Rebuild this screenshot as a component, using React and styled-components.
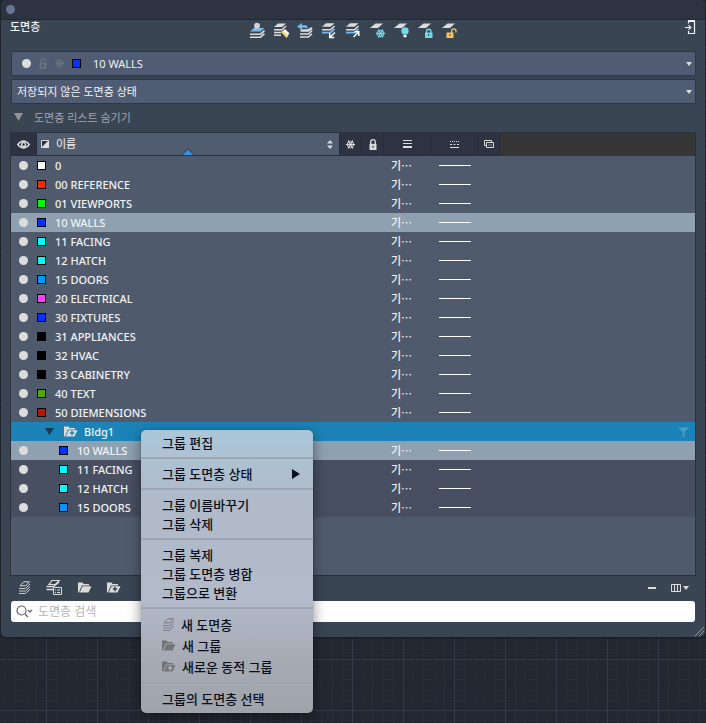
import React from 'react';

//styled
import styled, { createGlobalStyle } from 'styled-components';


const layers = [
    { name: '0', color: '#ffffff' },
    { name: '00 REFERENCE', color: '#ff2600' },
    { name: '01 VIEWPORTS', color: '#00f900' },
    { name: '10 WALLS', color: '#0433ff', selected: true },
    { name: '11 FACING', color: '#00fdff' },
    { name: '12 HATCH', color: '#00fdff' },
    { name: '15 DOORS', color: '#0096ff' },
    { name: '20 ELECTRICAL', color: '#ff40ff' },
    { name: '30 FIXTURES', color: '#0433ff' },
    { name: '31 APPLIANCES', color: '#000000' },
    { name: '32 HVAC', color: '#000000' },
    { name: '33 CABINETRY', color: '#000000' },
    { name: '40 TEXT', color: '#4fa800' },
    { name: '50 DIEMENSIONS', color: '#b51700' },
];

const groupLayers = [
    { name: '10 WALLS', color: '#0433ff', selected: true },
    { name: '11 FACING', color: '#00fdff' },
    { name: '12 HATCH', color: '#00fdff' },
    { name: '15 DOORS', color: '#0096ff' },
];

// icons
const Icon = ({ w = 16, h = 16, children }) => (
    <svg width={w} height={h} viewBox={`0 0 ${w} ${h}`} fill="none" aria-hidden="true">
        {children}
    </svg>
);

const Caret = () => (
    <Icon w={6} h={4}><path d="M0 0h6L3 4z" fill="#dcdcdc" /></Icon>
);

const Snow = ({ color = '#dcdcdc' }) => (
    <Icon w={9} h={9}>
        <path d="M0 4.500h9M2.200.500l4.600 8M6.800.500l-4.600 8" stroke={color} strokeWidth="1.200" />
        <path d="M4.500 1.200L7.400 2.800v3.400L4.500 7.800 1.600 6.200V2.800z" stroke={color} />
    </Icon>
);

const Lock = ({ color = '#dcdcdc' }) => (
    <Icon w={8} h={11}>
        <path d="M1.700 5V3a2.300 2.300 0 0 1 4.600 0v2" stroke={color} strokeWidth="1.300" />
        <path d="M.5 4.800h7V11h-7z" fill={color} />
        <path d="M4 6.500v2.500" stroke="#2d3340" />
    </Icon>
);

const Sheets = ({ color = '#dcdcdc' }) => (
    <Icon w={13} h={13}>
        <path d="M5.800.800h5.700L7.800 4.800H2z" stroke={color} />
        <path d="M1 7.500H7.500L12 3.200M1 10H7.500L12 5.700M1 12.500H7.500L12 8.200" stroke={color} strokeWidth=".9" />
    </Icon>
);

const SheetsList = () => (
    <Icon w={17} h={17}>
        <path d="M6 1.500h7.200L9.500 5.500H3z" stroke="#dcdcdc" strokeWidth="1.200" />
        <path d="M.5 7.500H7.500L13 3M.5 10.500H7" stroke="#dcdcdc" strokeWidth="1.400" />
        <path d="M7.500 8.500h8v7h-8z" fill="#3a4554" stroke="#dcdcdc" />
        <path d="M9 11h1M11 11h3M9 13.500h1M11 13.500h3" stroke="#dcdcdc" />
    </Icon>
);

const Folder = ({ color = '#dcdcdc', mark }) => (
    <Icon w={14} h={11}>
        <path d="M0 10.500V.5h4.500l1.200 1.500H11v1.500H3.800L1 10.500z" fill={color} />
        <path d="M4.500 4.300H13.500L10.500 10.500H1.800z" fill={color} />
        {mark && <path d="M8 4.800v4.400M5.800 7h4.400" stroke={mark} strokeWidth="1.400" />}
    </Icon>
);

const SmallSheet = () => <path d="M1 6L6.500 1.500H14L9 6z" fill="#dcdcdc" />;

const toolIcons = [
    {
        label: '현재로 설정',
        art: <>
            <path d="M1 9.500L5 6h10.500l-4 3.500z" fill="#78b9ee" />
            <circle cx="8" cy="3.800" r="3" fill="#d2d2d4" />
            <path d="M1 12.200h10.500l4-3.600M1 15.200h10.500l4-3.600" stroke="#dcdcdc" strokeWidth="1.600" />
        </>,
    },
    {
        label: '도면층 일치',
        art: <>
            <path d="M1 5L5 1.500h8L9 5z" fill="#dcdcdc" />
            <path d="M1 7.700h8l4-3.600M1 10.500h7M1 13.200h7" stroke="#dcdcdc" strokeWidth="1.400" />
            <path d="M9.500 9.500L12 7l4.500 4.500L14 14z" fill="#fff" />
            <path d="M8 10l2-1.500 5.500 5-2 2.500z" fill="#fcd66f" />
        </>,
    },
    {
        label: '이전',
        art: <>
            <path d="M3.500 8.500h8L15 6" stroke="#dcdcdc" strokeWidth="2.400" />
            <path d="M3 12h8.500l3.500-3.200M3 15h8.500l3.500-3.200" stroke="#dcdcdc" strokeWidth="1.500" />
            <path d="M0 4.500L5 1v2.200h4.500l2 3.800-2.500-1.300H5V8z" fill="#78b9ee" />
        </>,
    },
    {
        label: '분리',
        art: <>
            <path d="M1 4.800L5 1.300h8.500l-4 3.500z" fill="#dcdcdc" />
            <path d="M1 7.700h8.500l4-3.600" stroke="#dcdcdc" strokeWidth="1.500" />
            <path d="M1 10.700h8.500l4-3.600" stroke="#78b9ee" strokeWidth="1.800" />
            <path d="M14 10.500L9 15M8.700 11v4.400h4.500" stroke="#fff" strokeWidth="1.500" />
        </>,
    },
    {
        label: '분리 해제',
        art: <>
            <path d="M1 4.800L5 1.300h8.500l-4 3.500z" fill="#dcdcdc" />
            <path d="M1 7.700h8.500l4-3.600" stroke="#dcdcdc" strokeWidth="1.500" />
            <path d="M1 10.700h8.500l4-3.600" stroke="#78b9ee" strokeWidth="1.800" />
            <path d="M8.500 15l5-5M9.500 9.800h4.300v4.200" stroke="#fff" strokeWidth="1.500" />
        </>,
    },
    {
        label: '동결',
        art: <>
            <SmallSheet />
            <path d="M7 11.500h9M9.300 7.500l4.500 8M13.800 7.500l-4.500 8" stroke="#6fd3e3" strokeWidth="1.300" />
            <circle cx="11.500" cy="11.500" r="3.200" stroke="#6fd3e3" strokeWidth="1.200" />
        </>,
    },
    {
        label: '끄기',
        art: <>
            <SmallSheet />
            <circle cx="12" cy="9" r="3.700" fill="#6fdbe4" />
            <path d="M10.500 13h3v1.500l-1 1h-1l-1-1z" fill="#fff" />
        </>,
    },
    {
        label: '잠금',
        art: <>
            <SmallSheet />
            <path d="M9.500 11V9.500a2 2 0 0 1 4.500 0V11" stroke="#6fdbe4" strokeWidth="1.300" />
            <path d="M8 10.500h7.500V16H8z" fill="#6fdbe4" />
            <path d="M11.700 12v2" stroke="#3a4554" />
        </>,
    },
    {
        label: '잠금 해제',
        art: <>
            <SmallSheet />
            <path d="M10.700 11V9a2 2 0 0 1 4.300 0v1.500" stroke="#fcc55c" strokeWidth="1.300" />
            <path d="M5.500 10.500h7V16h-7z" fill="#fcc55c" />
            <path d="M9 12v2" stroke="#3a4554" />
        </>,
    },
];

const GlobalStyle = createGlobalStyle`
 * {
     box-sizing: border-box;
 }
 body{
     margin: 0;
     background: #222831;
     font-family: "Noto Sans", "Noto Sans CJK KR", sans-serif;
     font-size: 11px;
     color: #f2f2f2;
 }
 button, select, input{
     font: inherit;
     color: inherit;
 }
 svg{
     display: block;
     flex: none;
 }
`;

const LayerRow = ({ layer, nested }) => (
    <Row $selected={layer.selected} $nested={nested}>
        <td><Dot type="checkbox" defaultChecked aria-label={layer.name} /></td>
        <td>
            <LayerName $nested={nested}>
                <Swatch $color={layer.color} />
                {layer.name}
            </LayerName>
        </td>
        <td />
        <td />
        <Weight>기⋯</Weight>
        <td><Stroke /></td>
        <td colSpan={2} />
    </Row>
);

const App = () => {
    return (
        <Desktop>
            <GlobalStyle />
            <Palette>
                <TitleBar><CloseButton aria-label="닫기" /></TitleBar>
                <Header>
                    <Title>도면층</Title>
                    <Tools>
                        {toolIcons.map((tool) => (
                            <IconButton key={tool.label} aria-label={tool.label}>
                                <Icon w={17} h={17}>{tool.art}</Icon>
                            </IconButton>
                        ))}
                    </Tools>
                    <DockButton aria-label="고정">
                        <Icon w={11} h={15}>
                            <path d="M3.500 3.500V1.500h6v12h-6V11" stroke="#f2f2f2" strokeWidth="1.200" />
                            <path d="M3 1h7" stroke="#f2f2f2" strokeWidth="2" />
                            <path d="M0 7.500h5M3.500 5.200L5.800 7.500 3.500 9.800" stroke="#f2f2f2" strokeWidth="1.200" />
                        </Icon>
                    </DockButton>
                </Header>

                <Content>
                    <Combo>
                        <LayerState>
                            <StateDot />
                            <Lock color="#68717f" />
                            <Snow color="#68717f" />
                            <Swatch $color="#0433ff" />
                        </LayerState>
                        <Select aria-label="현재 도면층" defaultValue="10 WALLS">
                            {layers.map((l) => <option key={l.name}>{l.name}</option>)}
                        </Select>
                        <Caret />
                    </Combo>
                    <Combo>
                        <Select aria-label="도면층 상태">
                            <option>저장되지 않은 도면층 상태</option>
                        </Select>
                        <Caret />
                    </Combo>

                    <Disclosure aria-expanded="true">
                        <Icon w={9} h={8}><path d="M0 0h9L4.500 8z" fill="#96938d" /></Icon>
                        도면층 리스트 숨기기
                    </Disclosure>

                    <ListBox>
                        <Table>
                            <colgroup>
                                <col width="26" />
                                <col width="303" />
                                <col width="22" />
                                <col width="22" />
                                <col width="47" />
                                <col width="47" />
                                <col width="22" />
                                <col />
                            </colgroup>
                            <thead>
                                <tr>
                                    <HeadCell>
                                        <Icon w={13} h={9}>
                                            <path d="M.7 4.500Q6.500-2.500 12.300 4.500 6.500 11.500.7 4.500z" stroke="#dcdcdc" strokeWidth="1.300" />
                                            <circle cx="6.500" cy="4.500" r="2" stroke="#dcdcdc" strokeWidth="1.400" />
                                        </Icon>
                                    </HeadCell>
                                    <HeadCell $sorted>
                                        <SortButton>
                                            <Icon w={8} h={8}>
                                                <path d="M0 0h8L0 8z" fill="#2d3340" />
                                                <path d="M8 0v8H0z" fill="#dcdcdc" />
                                                <path d="M.5.5h7v7h-7z" stroke="#dcdcdc" />
                                            </Icon>
                                            <span>이름</span>
                                            <Icon w={6} h={9}><path d="M3 0l3 3.500H0zM3 9L0 5.500h6z" fill="#dcdcdc" /></Icon>
                                        </SortButton>
                                        <SortMark>
                                            <Icon w={14} h={7}>
                                                <path d="M.5 6.500L7 .7l6.500 5.800" stroke="#3c4656" />
                                                <path d="M2 7l5-5 5 5z" fill="#2a94ee" />
                                            </Icon>
                                        </SortMark>
                                    </HeadCell>
                                    <HeadCell><Snow /></HeadCell>
                                    <HeadCell><Lock /></HeadCell>
                                    <HeadCell>
                                        <Icon w={9} h={8}><path d="M0 .5h9M0 3.500h9" stroke="#dcdcdc" /><path d="M0 7h9" stroke="#dcdcdc" strokeWidth="2" /></Icon>
                                    </HeadCell>
                                    <HeadCell>
                                        <Icon w={9} h={7}>
                                            <path d="M0 .5h9" stroke="#dcdcdc" strokeDasharray="1 1" />
                                            <path d="M0 3.500h9" stroke="#dcdcdc" strokeDasharray="2 1.500" />
                                            <path d="M0 6.500h9" stroke="#dcdcdc" />
                                        </Icon>
                                    </HeadCell>
                                    <HeadCell>
                                        <Icon w={10} h={8}>
                                            <path d="M2.500 5.500h-2v-5h7v2" stroke="#dcdcdc" />
                                            <path d="M2.500 2.500h7v5h-7z" stroke="#dcdcdc" />
                                            <path d="M4 5h4" stroke="#8a8f98" />
                                        </Icon>
                                    </HeadCell>
                                    <HeadFiller />
                                </tr>
                            </thead>
                            <tbody>
                                {layers.map((l) => <LayerRow key={l.name} layer={l} />)}
                                <GroupRow>
                                    <td colSpan={8}>
                                        <GroupLabel>
                                            <Icon w={9} h={7}><path d="M0 0h9L4.500 7z" fill="#1e3a50" /></Icon>
                                            <Folder mark="#1b83b8" />
                                            <span>Bldg1</span>
                                            <Icon w={11} h={10}><path d="M0 .5h11L6.500 5v5h-2V5z" fill="#4b9cc4" /></Icon>
                                        </GroupLabel>
                                    </td>
                                </GroupRow>
                                {groupLayers.map((l) => <LayerRow key={l.name} layer={l} nested />)}
                            </tbody>
                        </Table>
                    </ListBox>

                    <Footer>
                        <IconButton aria-label="새 도면층"><Sheets /></IconButton>
                        <IconButton aria-label="도면층 목록"><SheetsList /></IconButton>
                        <IconButton aria-label="새 그룹"><Folder /></IconButton>
                        <IconButton aria-label="새로운 동적 그룹"><Folder mark="#3a4554" /></IconButton>
                        <Spacer />
                        <IconButton aria-label="삭제">
                            <Icon w={8} h={2}><path d="M0 1h8" stroke="#dcdcdc" strokeWidth="2" /></Icon>
                        </IconButton>
                        <IconButton aria-label="열">
                            <Icon w={10} h={8}><path d="M.5.500h9v7h-9zM3.500 0v8M6.500 0v8" stroke="#dcdcdc" /></Icon>
                            <Caret />
                        </IconButton>
                    </Footer>

                    <Search>
                        <Icon w={17} h={13}>
                            <circle cx="5.500" cy="5.500" r="4.500" stroke="#606366" strokeWidth="1.200" />
                            <path d="M9 9l3 3M12 5l2 2 2-2" stroke="#606366" strokeWidth="1.200" />
                        </Icon>
                        <input type="search" placeholder="도면층 검색" aria-label="도면층 검색" />
                    </Search>
                </Content>

                <Grip>
                    <Icon w={9} h={9}><path d="M0 9l9-9M4 9l5-5" stroke="#9a9ea5" /></Icon>
                </Grip>

                <Menu role="menu">
                    <MenuItem role="menuitem">그룹 편집</MenuItem>
                    <Divider />
                    <MenuItem role="menuitem">
                        <span>그룹 도면층 상태</span>
                        <Icon w={8} h={10}><path d="M0 0l8 5-8 5z" fill="#0a0f1a" /></Icon>
                    </MenuItem>
                    <Divider />
                    <MenuItem role="menuitem">그룹 이름바꾸기</MenuItem>
                    <MenuItem role="menuitem">그룹 삭제</MenuItem>
                    <Divider />
                    <MenuItem role="menuitem">그룹 복제</MenuItem>
                    <MenuItem role="menuitem">그룹 도면층 병합</MenuItem>
                    <MenuItem role="menuitem">그룹으로 변환</MenuItem>
                    <Divider />
                    <MenuItem role="menuitem" $tall><Sheets color="#77797c" />새 도면층</MenuItem>
                    <MenuItem role="menuitem" $tall><Folder color="#727476" />새 그룹</MenuItem>
                    <MenuItem role="menuitem" $tall><Folder color="#727476" mark="#adb1bb" />새로운 동적 그룹</MenuItem>
                    <Divider />
                    <MenuItem role="menuitem">그룹의 도면층 선택</MenuItem>
                </Menu>
            </Palette>
        </Desktop>
    );
}

const minor = '#272e3a';
const major = '#323a4c';
const gridLines = (dir) => `linear-gradient(${dir}, ${major} 1px, transparent 1px 10px, ${minor} 10px 11px, transparent 11px 20px,
 ${minor} 20px 21px, transparent 21px 31px, ${minor} 31px 32px, transparent 32px 41px, ${minor} 41px 42px, transparent 42px)`;

const Desktop = styled.div`
 min-height: 100vh;
 padding: 0 1px;
 overflow: hidden;
 background-color: #222831;
 background-image: ${gridLines('to right')}, ${gridLines('to bottom')};
 background-size: 51px 51px;
 background-position: 46px 47px;
`;

const Palette = styled.section`
 position: relative;
 background: #3a4554;
 border-radius: 5px;
 box-shadow: 0 1px 4px #161a20;
`;

const TitleBar = styled.div`
 display: flex;
 align-items: center;
 height: 20px;
 padding: 0 5px;
 background: #2d3340;
 border-bottom: 1px solid #222831;
 border-radius: 5px 5px 0 0;
`;

const CloseButton = styled.button`
 width: 9px;
 height: 9px;
 padding: 0;
 border: 0;
 border-radius: 50%;
 background: #657593;
`;

const Header = styled.header`
 display: grid;
 grid-template-columns: 1fr auto 1fr;
 align-items: start;
 height: 31px;
 padding: 0 9px;
`;

const Title = styled.h1`
 margin: 0;
 font-size: 11px;
 font-weight: 500;
 line-height: 14px;
`;

const Tools = styled.div`
 display: flex;
 gap: 7px;
 padding-top: 2px;
`;

const IconButton = styled.button`
 display: flex;
 align-items: center;
 gap: 2px;
 padding: 0;
 border: 0;
 background: none;
`;

const DockButton = styled(IconButton)`
 justify-self: end;
`;

const Content = styled.div`
 display: flex;
 flex-direction: column;
 padding: 0 9px 15px;
`;

const Combo = styled.div`
 display: flex;
 align-items: center;
 height: 25px;
 margin: 0 0 3px 1px;
 padding: 0 3px 0 5px;
 background: #505c73;
 border: 1px solid #2c3840;
 border-radius: 2px;
`;

const LayerState = styled.div`
 display: flex;
 align-items: center;
 gap: 8px;
 padding: 0 12px 0 5px;
`;

const StateDot = styled.span`
 width: 9px;
 height: 9px;
 border-radius: 50%;
 background: #dcdcdc;
`;

const Select = styled.select`
 flex: 1;
 min-width: 0;
 padding: 0;
 border: 0;
 appearance: none;
 background: none;
 line-height: 16px;
`;

const Swatch = styled.span`
 flex: none;
 width: 9px;
 height: 9px;
 border: 1px solid #000;
 background: ${(p) => p.$color};
`;

const Disclosure = styled.button`
 display: flex;
 align-items: center;
 align-self: start;
 gap: 11px;
 height: 20px;
 margin-bottom: 5px;
 padding: 0 4px;
 border: 0;
 background: none;
 color: #a0a5ad;
`;

const ListBox = styled.div`
 padding-bottom: 58px;
 background: #4f5b6d;
 border: 1px solid #2a303c;
`;

const Table = styled.table`
 width: 100%;
 table-layout: fixed;
 border-collapse: separate;
 border-spacing: 0;
 td, th{
     padding: 0;
 }
`;

const HeadCell = styled.th`
 position: relative;
 height: 23px;
 font-weight: 400;
 background: ${(p) => (p.$sorted ? '#505c70' : '#2d3340')};
 border-right: 1px solid #272d39;
 border-bottom: 1px solid #2a303c;
 > svg{
     margin: 0 auto;
 }
`;

const HeadFiller = styled.td`
 background: #363636;
`;

const SortButton = styled.button`
 display: flex;
 align-items: center;
 gap: 7px;
 width: 100%;
 padding: 0 6px 0 4px;
 border: 0;
 background: none;
 text-align: left;
 line-height: 16px;
 span{
     flex: 1;
 }
`;

const SortMark = styled.span`
 position: absolute;
 left: 50%;
 bottom: 0;
 margin-left: -7px;
`;

const Row = styled.tr`
 height: 19px;
 font-weight: 500;
 line-height: 15px;
 background: ${(p) => (p.$selected ? '#8fa0b1' : p.$nested ? '#474f61' : 'transparent')};
`;

const LayerName = styled.div`
 display: flex;
 align-items: center;
 gap: 9px;
 padding-left: ${(p) => (p.$nested ? '22px' : '0')};
`;

const Dot = styled.input`
 display: block;
 width: 9px;
 height: 9px;
 margin: 0 0 0 8px;
 appearance: none;
 border-radius: 50%;
 background: #dcdcdc;
`;

const Weight = styled.td`
 && {
     padding-left: 7px;
 }
`;

const Stroke = styled.span`
 display: block;
 width: 32px;
 height: 1px;
 margin-left: 8px;
 background: #fff;
`;

const GroupRow = styled(Row)`
 background: #1b83b8;
`;

const GroupLabel = styled.div`
 display: flex;
 align-items: center;
 gap: 6px;
 padding: 0 6px 0 34px;
 svg:first-child{
     margin-right: 4px;
 }
 span{
     flex: 1;
 }
`;

const Footer = styled.div`
 display: flex;
 align-items: center;
 gap: 15px;
 height: 25px;
 padding: 0 7px 2px 8px;
`;

const Spacer = styled.div`
 flex: 1;
`;

const Search = styled.label`
 display: flex;
 align-items: center;
 gap: 5px;
 height: 21px;
 margin: 0 1px;
 padding: 0 5px;
 background: #fff;
 border-radius: 3px;
 input{
     flex: 1;
     min-width: 0;
     padding: 0;
     border: 0;
     outline: 0;
     background: none;
     color: #333;
     font-size: 12px;
     line-height: 18px;
 }
 input::placeholder{
     color: #b4b4b4;
 }
`;

const Grip = styled.div`
 position: absolute;
 right: 1px;
 bottom: 1px;
`;

const Menu = styled.div`
 position: absolute;
 top: 430px;
 left: 140px;
 width: 172px;
 padding: 3px 0 5px;
 border-radius: 5px;
 background: linear-gradient(#abc6da, #b0bac8 25%, #b3bac9 60%, #a7abb5 80%, #9fa3aa);
 box-shadow: 0 4px 14px rgba(0, 0, 0, .45), 0 0 1px rgba(0, 0, 0, .6);
`;

const MenuItem = styled.button`
 display: flex;
 align-items: center;
 gap: 6px;
 width: 100%;
 height: ${(p) => (p.$tall ? '21px' : '19px')};
 padding: 0 13px 0 21px;
 border: 0;
 background: none;
 color: #0a0f1a;
 font-size: 13px;
 font-weight: 500;
 text-align: left;
 span{
     flex: 1;
 }
`;

const Divider = styled.hr`
 height: 2px;
 margin: 5px 0;
 border: 0;
 background: #9ca5b1;
`;

export default App;
